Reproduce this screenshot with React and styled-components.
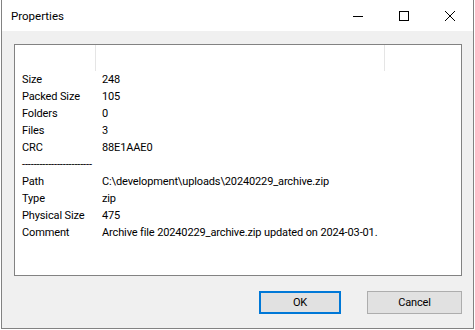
import React from "react";
import styled, { createGlobalStyle } from "styled-components";

const GlobalStyle = createGlobalStyle`
  html, body { margin: 0; padding: 0; background: #ffffff; }
  body {
    font-family: Roboto, "Liberation Sans", Arial, sans-serif;
    font-size: 11px;
    letter-spacing: -0.13px;
    color: #000;
  }
`;

const Window = styled.div`
  box-sizing: border-box;
  width: 473px;
  height: 329px;
  margin-left: 1px;
  border: 1px solid #828282;
  border-top: none;
  background: #f0f0f0;
  display: flex;
  flex-direction: column;
`;

const TitleBar = styled.div`
  height: 31px;
  background: #ffffff;
  display: flex;
  align-items: center;
  flex-shrink: 0;
`;

const Title = styled.div`
  flex: 1;
  padding-left: 9px;
  font-size: 11.5px;
  letter-spacing: 0;
  color: #000;
`;

const CaptionButton = styled.div`
  width: 46px;
  height: 31px;
  display: flex;
  align-items: center;
  justify-content: center;
`;

const Body = styled.div`
  flex: 1;
  display: flex;
  flex-direction: column;
  padding: 13px 11px 14px 12px;
`;

const Panel = styled.div`
  box-sizing: border-box;
  height: 232px;
  border: 1px solid #828282;
  background: #ffffff;
  display: flex;
  flex-direction: column;
`;

const HeaderRow = styled.div`
  display: flex;
  height: 26px;
`;

const HeaderCell = styled.div`
  box-sizing: border-box;
  width: ${(p) => p.$w}px;
  border-right: 1px solid #e5e5e5;
`;

const Rows = styled.div`
  display: grid;
  grid-template-columns: 81px 1fr;
  grid-auto-rows: 17px;
`;

const Label = styled.div`
  padding-left: 7px;
  line-height: 17px;
  white-space: nowrap;
`;

const Value = styled.div`
  padding-left: 6px;
  line-height: 17px;
  white-space: nowrap;
`;

const Footer = styled.div`
  display: flex;
  justify-content: flex-end;
  gap: 26px;
  margin-top: 15px;
`;

const Button = styled.button`
  box-sizing: border-box;
  width: ${(p) => p.$w}px;
  height: 23px;
  padding: 0;
  font-family: Roboto, "Liberation Sans", Arial, sans-serif;
  font-size: 11px;
  letter-spacing: -0.13px;
  color: #000;
  background: #e1e1e1;
  border: ${(p) => (p.$default ? "2px solid #0078d7" : "1px solid #adadad")};
`;

const rows = [
  ["Size", "248"],
  ["Packed Size", "105"],
  ["Folders", "0"],
  ["Files", "3"],
  ["CRC", "88E1AAE0"],
  ["------------------------", ""],
  ["Path", "C:\\development\\uploads\\20240229_archive.zip"],
  ["Type", "zip"],
  ["Physical Size", "475"],
  ["Comment", "Archive file 20240229_archive.zip updated on 2024-03-01."],
];

export default function App() {
  return (
    <>
      <GlobalStyle />
      <Window>
        <TitleBar>
          <Title>Properties</Title>
          <CaptionButton>
            <svg width="10" height="10" viewBox="0 0 10 10">
              <path d="M0 5.5H10" stroke="#000" strokeWidth="1" />
            </svg>
          </CaptionButton>
          <CaptionButton>
            <svg width="10" height="10" viewBox="0 0 10 10">
              <rect x="0.5" y="0.5" width="9" height="9" fill="none" stroke="#000" strokeWidth="1" />
            </svg>
          </CaptionButton>
          <CaptionButton>
            <svg width="10" height="10" viewBox="0 0 10 10">
              <path d="M0 0L10 10M10 0L0 10" stroke="#000" strokeWidth="1" />
            </svg>
          </CaptionButton>
        </TitleBar>
        <Body>
          <Panel>
            <HeaderRow>
              <HeaderCell $w={81} />
              <HeaderCell $w={289} />
            </HeaderRow>
            <Rows>
              {rows.map(([l, v], i) => (
                <React.Fragment key={i}>
                  <Label>{l}</Label>
                  <Value>{v}</Value>
                </React.Fragment>
              ))}
            </Rows>
          </Panel>
          <Footer>
            <Button $w={82} $default>OK</Button>
            <Button $w={95}>Cancel</Button>
          </Footer>
        </Body>
      </Window>
    </>
  );
}
